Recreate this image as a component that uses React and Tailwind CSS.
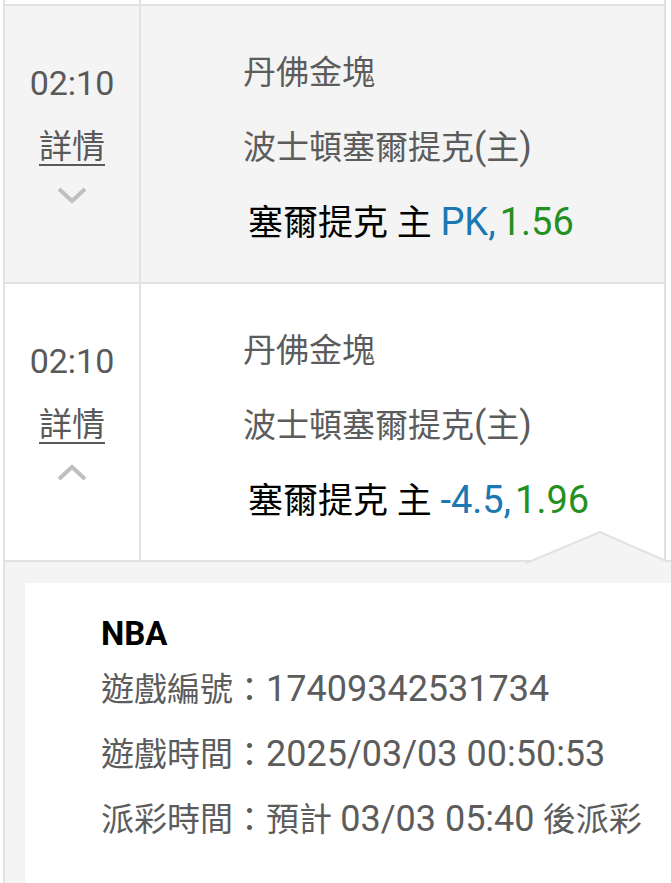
import React from "react";

const font = "font-['Roboto','Noto_Sans_CJK_TC',sans-serif]";

const Chevron = ({ up }) => (
  <svg width="32" height="18" viewBox="0 0 32 18" className="mx-auto">
    <path
      d={up ? "M3 15 L16 3 L29 15" : "M3 3 L16 15 L29 3"}
      fill="none"
      stroke="#bfbfbf"
      strokeWidth="4"
    />
  </svg>
);

// latin text on the device renders a bit larger than the CJK glyphs
const L = ({ children }) => <span className="text-[36px]">{children}</span>;

const MatchRow = ({ grey, open, handicap, odds }) => (
  <div className={`flex border-t-2 border-[#e2e2e2] h-[278px] ${grey ? "bg-[#f4f4f4]" : "bg-white"}`}>
    {/* time column */}
    <div className="w-[138px] border-l-2 border-r-2 border-[#e2e2e2] pt-[55px] text-center text-[#595959]">
      <div className="text-[34px] leading-[44px]">02:10</div>
      <div className="mt-[20px] text-[33px] leading-[44px] underline decoration-2 underline-offset-[6px]">
        詳情
      </div>
      <div className="mt-[17px]">
        <Chevron up={open} />
      </div>
    </div>

    {/* teams */}
    <div className="flex-1 border-r-2 border-[#e2e2e2] pl-[102px] pt-[30px] leading-[74px]">
      <div className="text-[33px] text-[#5c5c5c]">丹佛金塊</div>
      <div className="text-[33px] text-[#5c5c5c]">
        波士頓塞爾提克<span className="text-[36px]">(</span>主<span className="text-[36px]">)</span>
      </div>
      <div className="pl-[5px] text-[35px] text-black">
        塞爾提克 主 <span className="text-[38px] text-[#1b78b3]">{handicap}</span>
        <span className="ml-[4px] text-[38px] text-[#23901f]">{odds}</span>
      </div>
    </div>
  </div>
);

export default function App() {
  return (
    <div className={`relative w-[671px] h-[883px] overflow-hidden bg-white ${font}`}>
      {/* tail of the previous row */}
      <div className="flex h-[4px] ml-[3px] w-[663px]">
        <div className="w-[138px] border-l-2 border-r-2 border-[#e2e2e2]"></div>
        <div className="flex-1 border-r-2 border-[#e2e2e2]"></div>
      </div>

      <div className="ml-[3px] w-[663px]">
        <MatchRow grey handicap="PK," odds="1.56" />
        <MatchRow open handicap="-4.5," odds="1.96" />
      </div>

      {/* detail panel */}
      <div className="ml-[3px] border-t-2 border-l-2 border-[#e2e2e2] bg-[#f4f4f4] pl-[20px] pt-[21px] h-[330px]">
        <div className="h-full bg-white pl-[76px] pt-[31px]">
          <div className="text-[33px] leading-[40px] font-bold text-black">NBA</div>
          <div className="mt-[3px] text-[33px] leading-[65px] text-[#5c5c5c]">
            <div>
              遊戲編號：<L>17409342531734</L>
            </div>
            <div>
              遊戲時間：<L>2025/03/03 00:50:53</L>
            </div>
            <div>
              派彩時間：預計 <L>03/03 05:40</L> 後派彩
            </div>
          </div>
        </div>
      </div>

      {/* callout arrow */}
      <svg className="absolute left-[526px] top-[530px]" width="145" height="36" viewBox="0 0 145 36">
        <polygon points="0,34 74,2 140,31 140,36 0,36" fill="#f4f4f4" />
        <polyline points="0,33 74,2 140,31" fill="none" stroke="#e2e2e2" strokeWidth="2" />
      </svg>
    </div>
  );
}
